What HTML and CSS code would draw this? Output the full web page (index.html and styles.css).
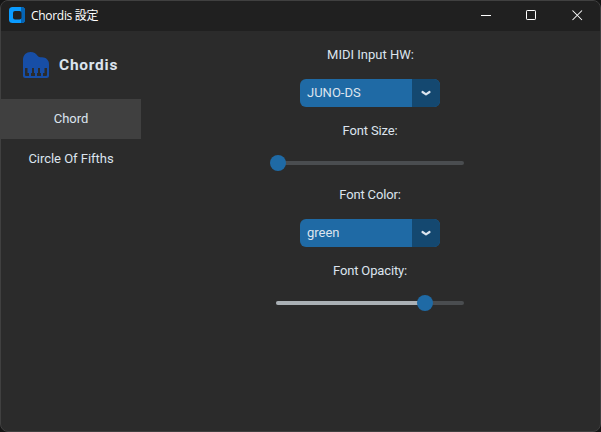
FILE: index.html
```html
<!DOCTYPE html>
<html lang="ja">
<head>
<meta charset="utf-8">
<title>Chordis 設定</title>
<link rel="stylesheet" href="styles.css">
</head>
<body>
<div class="window">
  <header class="titlebar">
    <svg class="app-icon" width="16" height="16" viewBox="0 0 16 16">
      <rect width="16" height="16" rx="3.500" fill="#0a9bff"/>
      <path d="M12 0h.5A3.500 3.500 0 0 1 16 3.500V12.500A3.500 3.500 0 0 1 12.500 16H12z" fill="#0564b4"/>
      <rect x="4" y="4" width="8.500" height="8.500" rx="2" fill="#202020"/>
    </svg>
    <span class="title">Chordis 設定</span>
    <div class="controls">
      <svg width="46" height="30" viewBox="0 0 46 30"><path d="M18 14.500h10" stroke="#fff" fill="none"/></svg>
      <svg width="46" height="30" viewBox="0 0 46 30"><rect x="17.500" y="9.500" width="9" height="9" rx=".7" stroke="#fff" fill="none"/></svg>
      <svg width="46" height="30" viewBox="0 0 46 30"><path d="M17.500 9.500l9.500 9.500m0-9.500l-9.500 9.500" stroke="#fff" stroke-width="1.050" fill="none"/></svg>
    </div>
  </header>
  <div class="body">
    <nav class="sidebar">
      <div class="brand">
        <svg width="26" height="26" viewBox="0 0 26 26">
          <path d="M0 7.500C0 3 3.400 0 7.500 0c3.500 0 5.500 1.500 7 3.700 1 1.500 2.100 1.500 4.500 1.500 4 0 7 2.800 7 6.800V23.500A2.500 2.500 0 0 1 23.500 26h-21A2.500 2.500 0 0 1 0 23.500z" fill="#174ea6"/>
          <path d="M2 16h2.500v5H6v3H3q-1 0-1-1zM9 16h2v5h1v3H8v-3h1zM15 16h2v5h1v3h-4v-3h1zM21.500 16H24v7q0 1-1 1h-3v-3h1.500z" fill="#2b2b2b"/>
        </svg>
        <span>Chordis</span>
      </div>
      <div class="tab selected">Chord</div>
      <div class="tab">Circle Of Fifths</div>
    </nav>
    <main class="settings">
      <div class="label wide">MIDI Input HW:</div>
      <div class="select"><span class="value">JUNO-DS</span><span class="arrow"><svg width="12" height="8" viewBox="0 0 12 8"><path d="M2.500 3L6 5.300 9.500 3" class="chevron"/></svg></span></div>
      <div class="label">Font Size:</div>
      <div class="slider"><div class="fill" style="width:2px"></div><div class="knob"></div></div>
      <div class="label">Font Color:</div>
      <div class="select"><span class="value">green</span><span class="arrow"><svg width="12" height="8" viewBox="0 0 12 8"><path d="M2.500 3L6 5.300 9.500 3" class="chevron"/></svg></span></div>
      <div class="label">Font Opacity:</div>
      <div class="slider"><div class="fill" style="width:149px"></div><div class="knob"></div></div>
    </main>
  </div>
</div>
</body>
</html>
```
FILE: styles.css
```css
* { box-sizing: border-box; }
body {
  margin: 0;
  background: #151515;
  overflow: hidden;
  font: 13px/20px Roboto, "Noto Sans CJK JP", sans-serif;
  color: #dce4ee;
}
.window {
  width: 601px;
  height: 432px;
  border: 1px solid #404040;
  border-radius: 8px;
  overflow: hidden;
  background: #2b2b2b;
}
.titlebar {
  height: 30px;
  display: flex;
  align-items: center;
  padding-left: 8px;
  background: #202020;
  color: #fff;
}
.app-icon { display: block; margin-top: -2px; }
.title {
  margin-left: 6px;
  font: 12px/20px "Open Sans", "Noto Sans CJK JP", sans-serif;
  letter-spacing: -0.3px;
}
.controls { display: flex; margin: 0 -1px 0 auto; }
.controls svg { display: block; }
.body { display: flex; }
.sidebar { width: 140px; letter-spacing: -0.03px; }
.brand {
  height: 68px;
  display: flex;
  align-items: center;
  padding-left: 22px;
  gap: 10px;
  font-size: 15.5px;
  font-weight: 700;
  letter-spacing: 0.75px;
}
.tab {
  height: 40px;
  line-height: 40px;
  text-align: center;
}
.selected { background: #404040; }
.settings {
  flex: 1;
  display: flex;
  flex-direction: column;
  align-items: center;
  padding: 14px 1px 0 0;
}
.label { height: 20px; letter-spacing: -0.15px; }
.wide { letter-spacing: 0; padding-left: 1px; }
.select {
  display: flex;
  width: 140px;
  height: 28px;
  margin: 14px 0;
  border-radius: 6px;
  overflow: hidden;
  background: #1f6aa5;
}
.value { flex: 1; padding-left: 7px; line-height: 28px; }
.arrow {
  width: 28px;
  display: flex;
  align-items: center;
  justify-content: center;
  background: #144870;
}
.chevron {
  fill: none;
  stroke: #dce4ee;
  stroke-width: 2.2;
  stroke-linecap: round;
  stroke-linejoin: round;
}
.slider {
  display: flex;
  align-items: center;
  width: 188px;
  height: 4px;
  margin: 20px 0;
  border-radius: 2px;
  background: #4a4d50;
}
.fill { height: 4px; border-radius: 2px; background: #aab0b5; }
.knob {
  flex: none;
  width: 16px;
  height: 16px;
  margin-left: -8px;
  border-radius: 50%;
  background: #1f6aa5;
}
```
